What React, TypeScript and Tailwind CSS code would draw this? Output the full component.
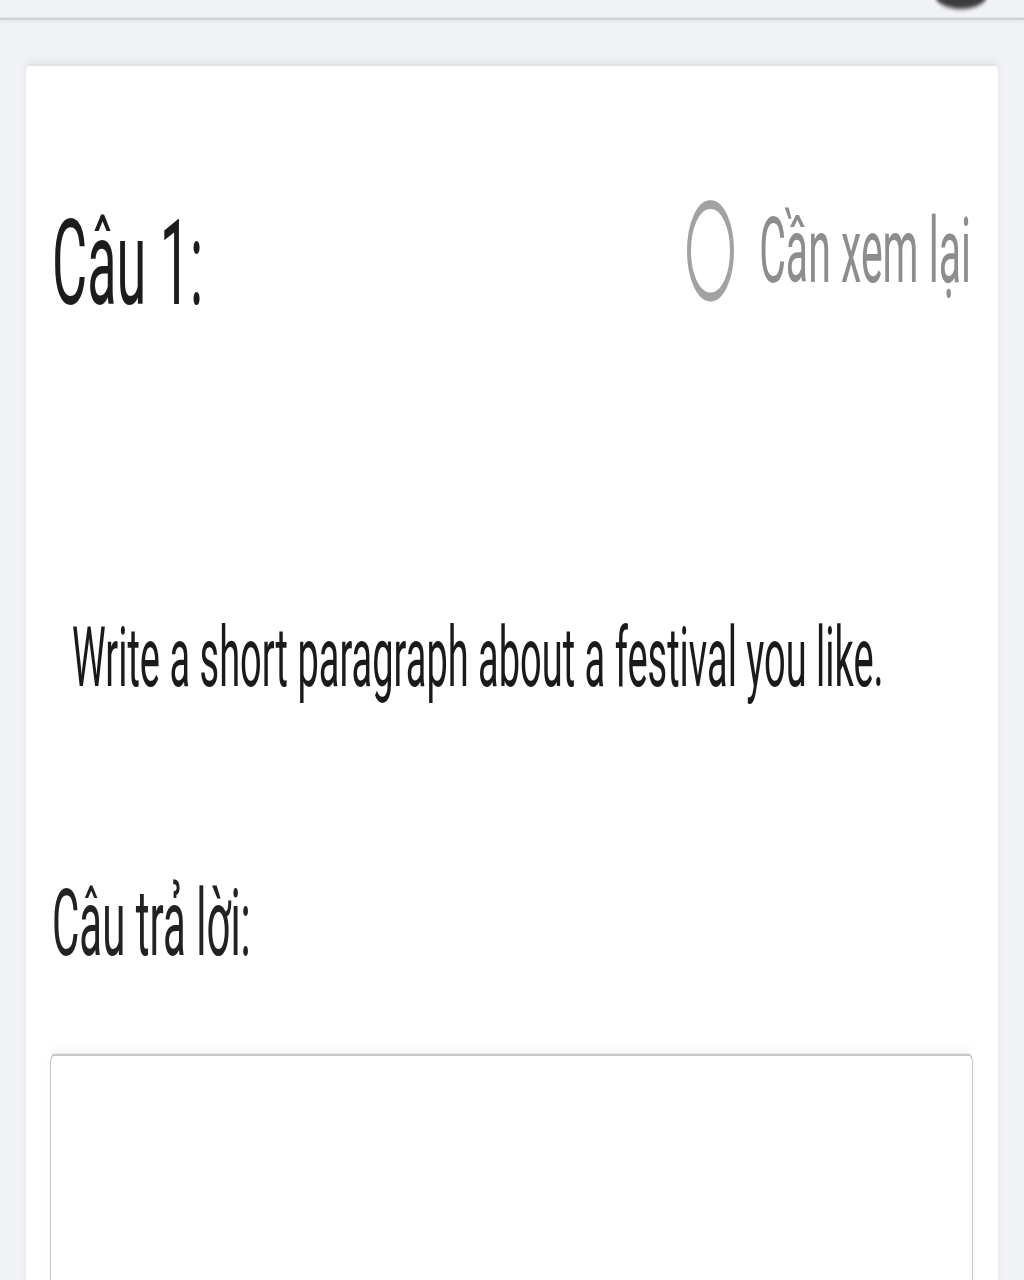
import React from 'react'

// The reference is a phone screenshot stretched vertically, so the page is
// laid out at normal proportions and then stretched with scale-y.
export default function App() {
    return (
        <div className="h-[1280px] w-[1024px] overflow-hidden bg-[#f2f3f7]">
            <div className="h-[582px] origin-top scale-y-[2.2] font-['Roboto',_'Noto_Sans',_sans-serif]">
                {/* Top bar */}
                <div className="relative h-[9px] border-b border-[#cdced3] bg-[#f1f2f6] shadow-[0_1px_2px_rgba(0,0,0,0.06)]">
                    <div className="absolute right-[36px] top-[-10px] h-[14px] w-[54px] rounded-[50%] bg-[#3b3b3b] blur-[1px]" />
                </div>

                {/* Question card */}
                <div className="mx-[26px] mt-[21px] h-[560px] rounded-t-[3px] bg-white pl-[26px] pr-[27px] pt-[61px] shadow-[0_-2px_6px_rgba(0,0,0,0.07)]">
                    <div className="flex items-center justify-between">
                        <h2 className="text-[54px] font-normal leading-none text-[#1c1c1c]">Câu 1:</h2>
                        <div className="mb-[11px] flex items-center gap-[25px]">
                            <span className="h-[46px] w-[47px] rounded-full border-[4px] border-[#a2a2a2]" />
                            <span className="text-[41px] leading-none text-[#8d8d8d]">Cần xem lại</span>
                        </div>
                    </div>

                    <p className="ml-[20px] mt-[132px] text-[38px] leading-none text-[#1a1a1a]">
                        Write a short paragraph about a festival you like.
                    </p>

                    <p className="mt-[81px] text-[42px] leading-none text-[#222222]">Câu trả lời:</p>

                    <textarea
                        className="-ml-[2px] mt-[38px] block h-[200px] w-[923px] resize-none rounded-[4px] border border-[#c6c6c6] bg-white shadow-[0_-3px_6px_rgba(0,0,0,0.03)] outline-none"
                    />
                </div>
            </div>
        </div>
    )
}
